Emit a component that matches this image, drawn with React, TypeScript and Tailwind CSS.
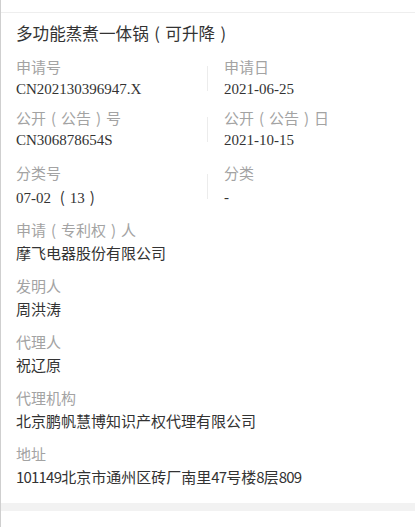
import React from 'react';

const sans = '"Noto Sans CJK SC", "Noto Sans", sans-serif';
const serif = '"Liberation Serif", "Noto Sans CJK SC", serif';

interface Field {
  label: string;
  value: string;
  latin?: boolean;
}

const pairRows: { left: Field; right: Field; tall?: boolean }[] = [
  {
    left: { label: '申请号', value: 'CN202130396947.X', latin: true },
    right: { label: '申请日', value: '2021-06-25', latin: true },
  },
  {
    left: { label: '公开（公告）号', value: 'CN306878654S', latin: true },
    right: { label: '公开（公告）日', value: '2021-10-15', latin: true },
  },
  {
    left: { label: '分类号', value: '07-02 （13）', latin: true },
    right: { label: '分类', value: '-', latin: true },
    tall: true,
  },
];

const singles: Field[] = [
  { label: '申请（专利权）人', value: '摩飞电器股份有限公司' },
  { label: '发明人', value: '周洪涛' },
  { label: '代理人', value: '祝辽原' },
  { label: '代理机构', value: '北京鹏帆慧博知识产权代理有限公司' },
  { label: '地址', value: '101149北京市通州区砖厂南里47号楼8层809' },
];

// full-width parens drawn centred in a 1em box, like the original font
const Txt: React.FC<{ text: string }> = ({ text }) => (
  <>
    {text.split(/([（）])/).map((part, i) =>
      part === '（' || part === '）' ? (
        <span key={i} className="inline-block w-[1em] text-center" style={{ fontFamily: sans }}>
          {part === '（' ? '(' : ')'}
        </span>
      ) : (
        <React.Fragment key={i}>{part}</React.Fragment>
      )
    )}
  </>
);

// digits in the original sans font are a bit narrower
const Digits: React.FC<{ text: string }> = ({ text }) => (
  <>
    {text.split(/(\d+)/).map((part, i) =>
      /^\d+$/.test(part) ? (
        <span key={i} className="tracking-[-0.8px]">{part}</span>
      ) : (
        <React.Fragment key={i}>{part}</React.Fragment>
      )
    )}
  </>
);

const Cell: React.FC<{ field: Field; tall?: boolean }> = ({ field, tall }) => (
  <div>
    <div className="text-[15px] leading-[22px] text-[#a3a3a3]"><Txt text={field.label} /></div>
    <div
      className={`text-[15px] text-[#333] whitespace-pre ${tall ? 'leading-[26px]' : 'leading-[22px]'}`}
      style={{ fontFamily: field.latin ? serif : sans }}
    >
      <Txt text={field.value} />
    </div>
  </div>
);

export default function App() {
  return (
    <div className="w-[415px] h-[527px] bg-white border-l border-[#cfcfcf]" style={{ fontFamily: sans }}>
      <div className="pt-3">
        <div className="border-t border-[#eeeeee] pl-[15px] pt-2 pb-[14px]">
          <div className="text-[16.6px] leading-[24px] text-[#333] mb-[11px]">
            <Txt text="多功能蒸煮一体锅（可升降）" />
          </div>

          {pairRows.map((row, i) => (
            <div key={i} className={`flex ${i === 0 ? 'mb-[7px]' : i === 1 ? 'mb-[11px]' : 'mb-[8px]'}`}>
              <div className="w-[191px]">
                <Cell field={row.left} tall={row.tall} />
              </div>
              <div className="self-center w-px h-[25px] bg-[#ececec]" />
              <div className="pl-4">
                <Cell field={row.right} tall={row.tall} />
              </div>
            </div>
          ))}

          {singles.map((f, i) => (
            <div key={i} className={i === singles.length - 1 ? '' : 'mb-[10px]'}>
              <div className="text-[15px] leading-[22px] text-[#a3a3a3]"><Txt text={f.label} /></div>
              <div className="text-[15px] leading-[24px] text-[#333]"><Digits text={f.value} /></div>
            </div>
          ))}
        </div>
        <div className="h-2 bg-[#f2f2f2]" />
      </div>
    </div>
  );
}
